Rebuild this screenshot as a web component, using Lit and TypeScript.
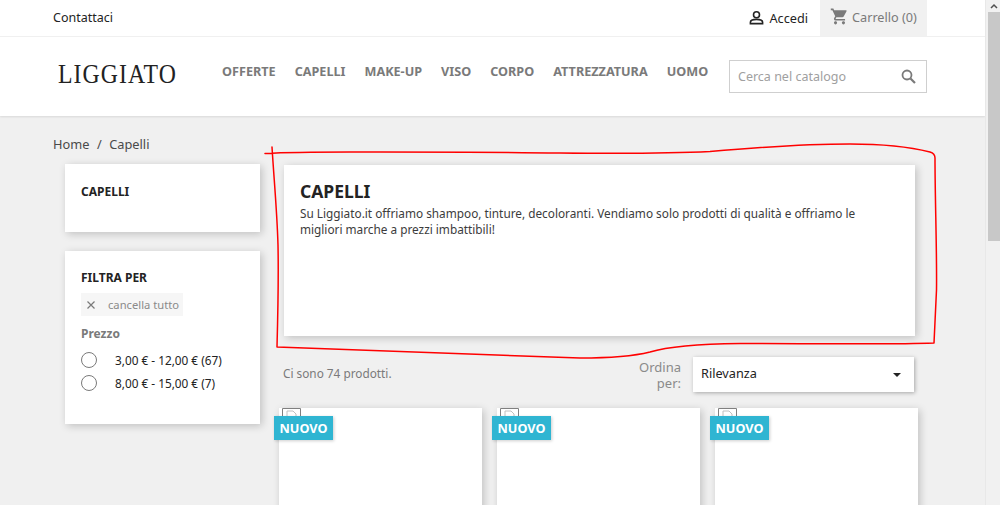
import { LitElement, css, html, svg } from "lit";
import { customElement } from "lit/decorators.js";

const NAV = ["OFFERTE", "CAPELLI", "MAKE-UP", "VISO", "CORPO", "ATTREZZATURA", "UOMO"];
const PRICES = ["3,00 € - 12,00 € (67)", "8,00 € - 15,00 € (7)"];

@customElement("app-root")
export class AppRoot extends LitElement {
  static styles = css`
    :host {
      display: grid;
      grid-template-columns: 1fr 15px;
      position: relative;
      height: 505px;
      overflow: hidden;
      background: #f0f0f0;
      font-family: "Noto Sans", sans-serif;
      font-size: 14px;
      color: #232323;
    }
    .page {
      min-width: 0;
    }
    /* top bar */
    .topbar {
      display: flex;
      align-items: center;
      justify-content: space-between;
      height: 36px;
      padding: 0 58px 0 53px;
      background: #fff;
      border-bottom: 1px solid #f1f1f1;
    }
    .contact {
      padding-bottom: 2px;
      font-size: 12.5px;
      color: #232323;
    }
    .user {
      display: flex;
      align-items: center;
      gap: 5px;
      margin-right: 12px;
      padding-bottom: 1px;
      font-size: 12.7px;
    }
    .account {
      display: flex;
      align-items: center;
    }
    .cart {
      display: flex;
      align-items: center;
      gap: 3px;
      box-sizing: border-box;
      width: 107px;
      height: 36px;
      padding: 0 0 3px 10px;
      background: #f1f1f1;
      font-size: 12.7px;
      color: #7a7a7a;
    }
    /* header */
    .header {
      display: flex;
      height: 79px;
      padding: 0 58px 0 58px;
      background: #fff;
      box-shadow: 0 1px 2px rgba(0, 0, 0, 0.1);
    }
    .logo {
      width: 164px;
      padding-top: 23px;
      font-family: "Liberation Serif", serif;
      font-size: 27px;
      line-height: 28px;
      letter-spacing: 1.2px;
      color: #222;
      transform: scaleX(0.88);
      transform-origin: left center;
    }
    .nav {
      display: flex;
      gap: 19px;
      padding-top: 25px;
      font-size: 12.65px;
      line-height: 18px;
      font-weight: 700;
      color: #7a7a7a;
    }
    .search {
      display: flex;
      align-items: center;
      justify-content: space-between;
      box-sizing: border-box;
      width: 198px;
      height: 33px;
      margin: 23px 0 0 auto;
      padding: 0 9px 0 8px;
      background: #fff;
      border: 1px solid #cfcfcf;
      font-size: 12.5px;
      color: #a0a0a0;
    }
    /* content */
    .crumbs {
      display: flex;
      gap: 7.5px;
      padding: 18px 0 0 53px;
      height: 30px;
      line-height: 20px;
      font-size: 12.8px;
      color: #4a4a4a;
    }
    .columns {
      display: flex;
      padding-left: 65px;
    }
    .sidebar {
      display: flex;
      flex-direction: column;
      gap: 19px;
      width: 195px;
      flex: none;
    }
    .card {
      background: #fff;
      box-shadow: 2px 2px 8px rgba(0, 0, 0, 0.2);
    }
    .side-title {
      box-sizing: border-box;
      height: 68px;
      padding: 19px 16px;
      font-size: 12px;
      line-height: 18px;
      font-weight: 700;
    }
    .filters {
      box-sizing: border-box;
      height: 173px;
      padding: 18px 16px;
    }
    .filters h3 {
      margin: 0;
      font-size: 12px;
      line-height: 17px;
      font-weight: 700;
    }
    .clear {
      display: inline-flex;
      align-items: center;
      gap: 12px;
      height: 23px;
      margin-top: 7px;
      padding: 0 0 0 5px;
      width: 102px;
      box-sizing: border-box;
      background: #f6f6f6;
      font-size: 11.2px;
      color: #8a8a8a;
    }
    .price-title {
      margin-top: 9px;
      font-size: 12px;
      line-height: 17px;
      font-weight: 700;
      color: #7a7a7a;
    }
    .prices {
      margin-top: 7px;
    }
    .price {
      display: flex;
      align-items: center;
      gap: 18px;
      height: 22.5px;
      font-size: 11.8px;
      color: #232323;
    }
    .radio {
      box-sizing: border-box;
      width: 16px;
      height: 16px;
      border: 1.5px solid #7a7a7a;
      border-radius: 50%;
    }
    .main {
      width: 640px;
      padding-left: 19px;
      flex: none;
    }
    .intro {
      box-sizing: border-box;
      width: 631px;
      height: 171px;
      margin: 1px 0 0 5px;
      padding: 14px 16px;
    }
    .intro h1 {
      margin: 0;
      font-size: 17.5px;
      line-height: 24px;
      font-weight: 700;
    }
    .intro p {
      margin: 3px 0 0;
      font-size: 11.8px;
      line-height: 15.5px;
      color: #3c3c3c;
    }
    .toolbar {
      display: flex;
      align-items: center;
      height: 35px;
      margin: 21px 0 0 4px;
      width: 631px;
    }
    .count {
      flex: 1;
      padding-bottom: 4px;
      font-size: 11.8px;
      color: #7a7a7a;
    }
    .sort-label {
      width: 46px;
      margin-right: 12px;
      text-align: right;
      font-size: 13px;
      line-height: 16px;
      color: #8a8a8a;
    }
    .select {
      display: flex;
      align-items: center;
      justify-content: space-between;
      box-sizing: border-box;
      width: 221px;
      height: 35px;
      padding: 0 13px 3px 8px;
      background: #fff;
      box-shadow: 1px 1px 4px rgba(0, 0, 0, 0.3);
      font-size: 12.7px;
      color: #232323;
    }
    .caret {
      width: 0;
      height: 0;
      margin-top: 3px;
      border: 4px solid transparent;
      border-top: 4px solid #232323;
      border-bottom: 0;
    }
    .products {
      display: grid;
      grid-template-columns: repeat(3, 203px);
      gap: 15px;
      margin-top: 16px;
    }
    .product {
      position: relative;
      height: 200px;
    }
    .broken {
      display: block;
      margin-left: 3px;
    }
    .badge {
      position: absolute;
      left: -5px;
      top: 8px;
      box-sizing: border-box;
      height: 24px;
      padding: 0 5.5px;
      background: #2fb5d2;
      box-shadow: 1px 1px 3px rgba(0, 0, 0, 0.2);
      font-size: 12.7px;
      line-height: 24px;
      font-weight: 700;
      color: #fff;
    }
    /* scrollbar */
    .scrollbar {
      display: flex;
      flex-direction: column;
      box-sizing: border-box;
      height: 505px;
      padding-left: 2px;
      background: #f1f1f1;
      border-left: 1px solid #e8e8e8;
    }
    .arrow {
      height: 12px;
      display: flex;
      align-items: center;
      justify-content: center;
    }
    .thumb {
      height: 229px;
      background: #c8c8c8;
    }
    /* hand-drawn annotation over the page */
    .scribble {
      position: absolute;
      left: 0;
      top: 0;
      pointer-events: none;
    }
  `;

  renderAnnotation() {
    return svg`
      <path d="M265 153.5 C300 151.5 340 152 380 152 C440 152 500 152 560 153 C610 153.5 670 153.5 710 151.5 C750 148 800 144 850 144 C880 144 910 147 930 152 Q935 153.5 935 158 C935 200 937 250 936.5 290 L934 343 C880 345 800 343 740 343.5 C700 344 670 346 650 352 C630 357 600 358 580 358 C480 355 380 351 277 347 C278 310 278.5 270 278 245 C277 210 274 180 272 147"
        fill="none" stroke="#f00" stroke-width="1.5" stroke-linecap="round" stroke-linejoin="round" />
    `;
  }

  render() {
    return html`
      <div class="page">
        <div class="topbar">
          <span class="contact">Contattaci</span>
          <div class="account">
            <span class="user">
              <svg width="15" height="15" viewBox="0 0 16 16" fill="none" stroke="#232323" stroke-width="1.7">
                <circle cx="8" cy="5" r="3.2" />
                <path d="M1.5 14.5 V13 C1.5 11 5 10 8 10 C11 10 14.5 11 14.5 13 V14.5 Z" />
              </svg>
              Accedi
            </span>
            <span class="cart">
              <svg width="19" height="19" viewBox="0 0 24 24" fill="#7a7a7a">
                <path d="M7 18c-1.1 0-2 .9-2 2s.9 2 2 2 2-.9 2-2-.9-2-2-2zM1 2v2h2l3.6 7.59-1.35 2.45c-.16.28-.25.61-.25.96 0 1.1.9 2 2 2h12v-2H7.42c-.14 0-.25-.11-.25-.25l.03-.12.9-1.63h7.45c.75 0 1.41-.41 1.75-1.03l3.58-6.49A1 1 0 0 0 20 4H5.21l-.94-2H1zm16 16c-1.1 0-2 .9-2 2s.9 2 2 2 2-.9 2-2-.9-2-2-2z" />
              </svg>
              Carrello (0)
            </span>
          </div>
        </div>

        <div class="header">
          <div class="logo">LIGGIATO</div>
          <nav class="nav">${NAV.map((item) => html`<span>${item}</span>`)}</nav>
          <div class="search">
            <span>Cerca nel catalogo</span>
            <svg width="17" height="17" viewBox="0 0 17 17" fill="none" stroke="#7a7a7a">
              <circle cx="7" cy="7" r="4.5" stroke-width="1.8" />
              <path d="M10.5 10.5 L15 15" stroke-width="2.2" />
            </svg>
          </div>
        </div>

        <div class="crumbs"><span>Home</span><span>/</span><span>Capelli</span></div>

        <div class="columns">
          <aside class="sidebar">
            <div class="card side-title">CAPELLI</div>
            <div class="card filters">
              <h3>FILTRA PER</h3>
              <div class="clear">
                <svg width="10" height="10" viewBox="0 0 10 10" stroke="#7a7a7a" stroke-width="1.2">
                  <path d="M1.5 1.5 L8.5 8.5 M8.5 1.5 L1.5 8.5" />
                </svg>
                cancella tutto
              </div>
              <div class="price-title">Prezzo</div>
              <div class="prices">
                ${PRICES.map(
                  (price) => html`<div class="price"><span class="radio"></span>${price}</div>`
                )}
              </div>
            </div>
          </aside>

          <main class="main">
            <section class="card intro">
              <h1>CAPELLI</h1>
              <p>
                Su Liggiato.it offriamo shampoo, tinture, decoloranti. Vendiamo solo prodotti di qualità e offriamo le
                migliori marche a prezzi imbattibili!
              </p>
            </section>

            <div class="toolbar">
              <span class="count">Ci sono 74 prodotti.</span>
              <span class="sort-label">Ordina per:</span>
              <div class="select">Rilevanza <span class="caret"></span></div>
            </div>

            <div class="products">
              ${[0, 1, 2].map(
                () => html`
                  <article class="card product">
                    <svg class="broken" width="19" height="16" viewBox="0 0 19 16" fill="none">
                      <path d="M.5 16 V.5 H18.5 V16" stroke="#808080" />
                      <path d="M5 12 V3 H11 L14 6 V12" stroke="#c0c0c0" />
                    </svg>
                    <span class="badge">NUOVO</span>
                  </article>
                `
              )}
            </div>
          </main>
        </div>
      </div>

      <div class="scrollbar">
        <div class="arrow">
          <svg width="8" height="6" viewBox="0 0 8 6" fill="none" stroke="#505050" stroke-width="1.5">
            <path d="M1 5 L4 2 L7 5" />
          </svg>
        </div>
        <div class="thumb"></div>
      </div>

      <svg class="scribble" width="1000" height="505">${this.renderAnnotation()}</svg>
    `;
  }
}
